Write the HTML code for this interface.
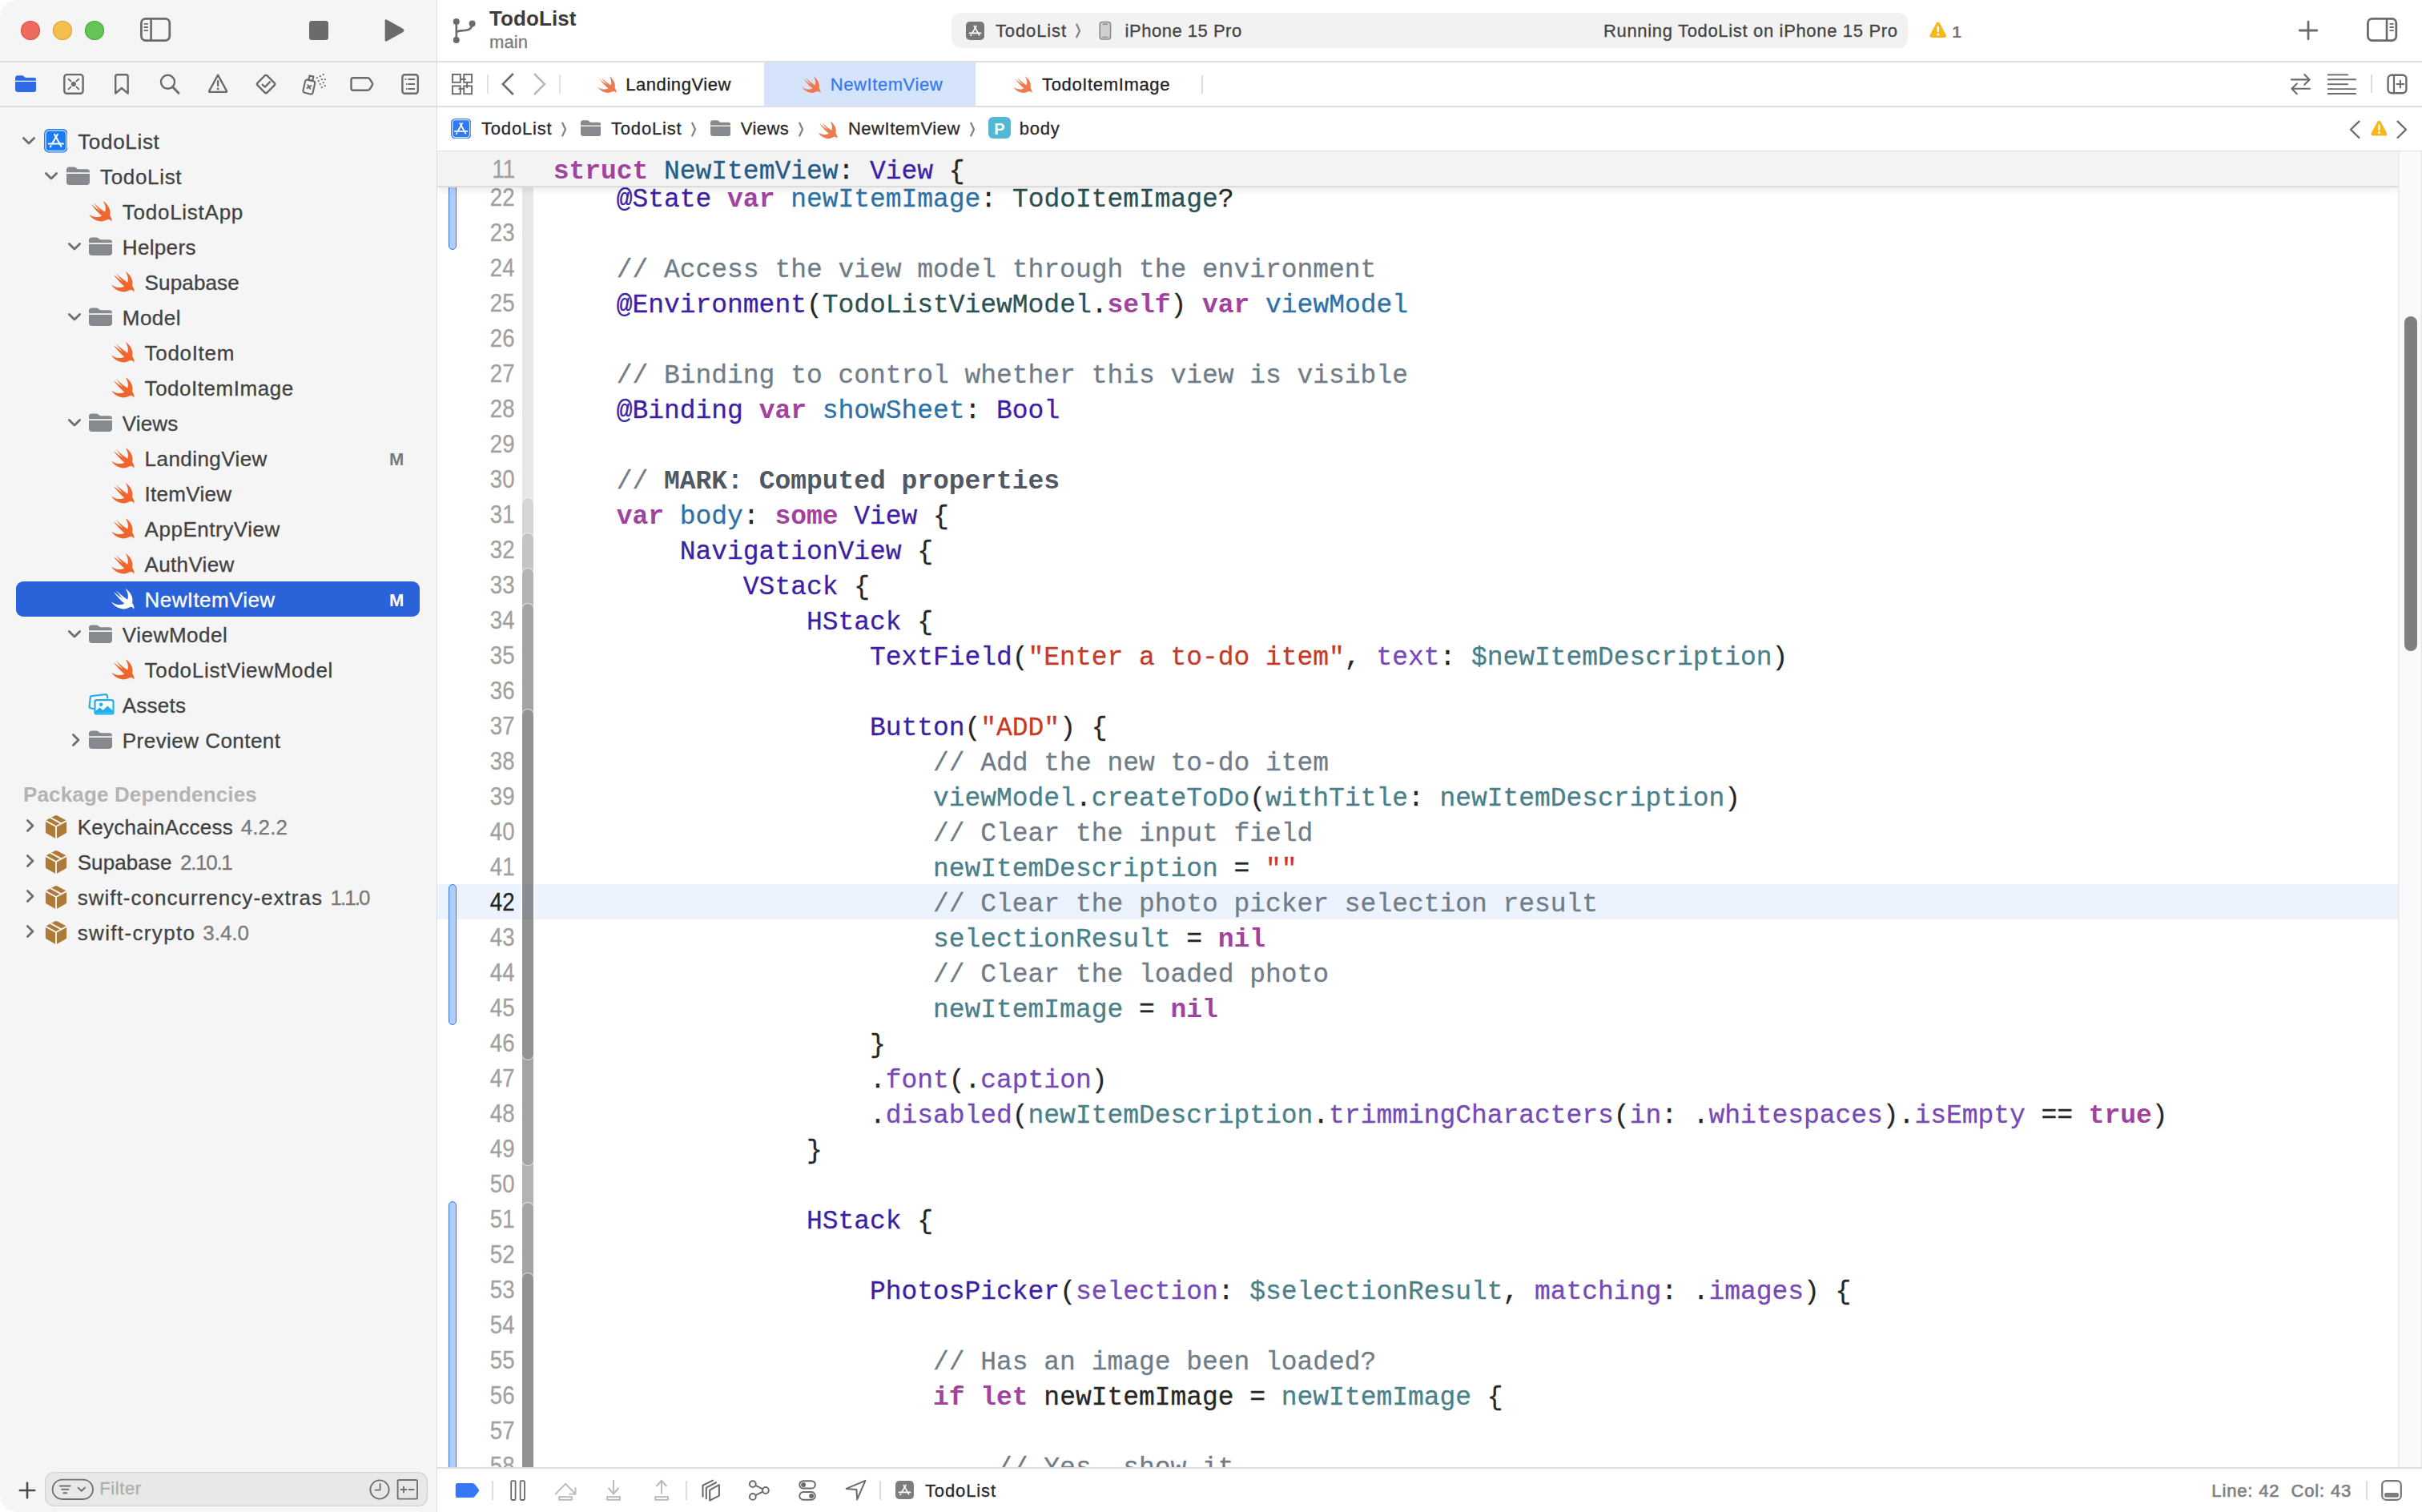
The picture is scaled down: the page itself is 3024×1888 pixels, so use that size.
<!DOCTYPE html>
<html lang="en"><head><meta charset="utf-8"><title>TodoList — NewItemView.swift</title>
<style>
html,body{margin:0;padding:0;background:#fff;}
body{width:3024px;height:1888px;overflow:hidden;position:relative;font-family:'Liberation Sans',sans-serif;}
#win{position:absolute;left:0;top:0;width:3024px;height:1888px;overflow:hidden;border-radius:22px 0 0 22px;background:#fff;}
#win div,#win span,#win svg{position:absolute;}
#win span{white-space:pre;-webkit-text-stroke:0.3px;}
.code{font-family:'Liberation Mono',monospace;font-size:33px;line-height:44px;letter-spacing:-0.04px;height:44px;left:692px;color:#262626;-webkit-text-stroke:0.35px;}
.code b{font-weight:700;}
.code i{font-style:normal;}
.k{color:#a1429f;font-weight:700;-webkit-text-stroke:0;}
.td{color:#245b88;}
.od{color:#2c72a8;}
.ot{color:#3d1fa5;}
.of{color:#7649b8;}
.pt{color:#2b5155;}
.pf{color:#4a8089;}
.s{color:#c63a28;}
.c{color:#707d89;}
.mk{color:#4f5964;font-weight:700;-webkit-text-stroke:0;}
.ln{font-size:31px;line-height:44px;height:44px;color:#a0a0a0;right:2351.2px;transform:scaleX(0.89);transform-origin:100% 50%;}

</style></head>
<body>
<div id="win">
<div style="left:0px;top:0px;width:545px;height:1888px;background:#f5f5f5;"></div>
<div style="left:544.5px;top:0px;width:1.5px;height:1888px;background:#dcdcdc;"></div>
<div style="left:0px;top:76px;width:545px;height:2px;background:#dcdcdc;"></div>
<div style="left:0px;top:132px;width:545px;height:2px;background:#dcdcdc;"></div>
<div style="left:546px;top:76px;width:2478px;height:2px;background:#e0e0e0;"></div>
<div style="left:546px;top:132px;width:2478px;height:2px;background:#e0e0e0;"></div>
<div style="left:546px;top:188px;width:2478px;height:2px;background:#e0e0e0;"></div>
<header id="toolbar">
<div style="left:26px;top:26px;width:24px;height:24px;border-radius:50%;background:#ed6a5e;box-shadow:inset 0 0 0 1px #d8574a;"></div>
<div style="left:66px;top:26px;width:24px;height:24px;border-radius:50%;background:#f5bf4f;box-shadow:inset 0 0 0 1px #d9a33c;"></div>
<div style="left:106px;top:26px;width:24px;height:24px;border-radius:50%;background:#62c554;box-shadow:inset 0 0 0 1px #4ea83c;"></div>
<svg style="left:172px;top:19px;" width="44" height="36" viewBox="0 0 44 36"><rect x="4.4" y="4.4" width="35.4" height="27.2" rx="5.5" fill="none" stroke="#6b6b6b" stroke-width="2.8"/><line x1="16.6" y1="4.4" x2="16.6" y2="31.6" stroke="#6b6b6b" stroke-width="2.6"/><g stroke="#6b6b6b" stroke-width="1.8" stroke-linecap="round"><line x1="8.4" y1="10.8" x2="12.2" y2="10.8"/><line x1="8.4" y1="15" x2="12.2" y2="15"/><line x1="8.4" y1="19.2" x2="12.2" y2="19.2"/></g></svg>
<div style="left:386px;top:26px;width:24px;height:24px;border-radius:3.5px;background:#6b6b6b;"></div>
<svg style="left:476px;top:20px;" width="34" height="36" viewBox="0 0 34 36"><path d="M4.6 6.2 L4.6 29.8 Q4.6 32.6 7.2 31.2 L27.4 19.9 Q29.6 18 27.4 16.1 L7.2 4.8 Q4.6 3.4 4.6 6.2 Z" fill="#6b6b6b"/></svg>
<svg style="left:560px;top:18px;" width="40" height="42" viewBox="0 0 40 42"><g fill="#6b6b6b"><circle cx="9.8" cy="9" r="4"/><circle cx="9.8" cy="32" r="4"/><circle cx="29.6" cy="11.6" r="4"/></g><path d="M9.8 9 V32 M9.8 23.5 Q9.8 21 14 20.6 L22 19.8 Q29.6 19 29.6 11.6" fill="none" stroke="#6b6b6b" stroke-width="2.6"/></svg>
<span style="top:10.19px;font-size:26px;line-height:26px;color:#3c3c3c;font-weight:700;-webkit-text-stroke:0;letter-spacing:0.096px;left:611px;">TodoList</span>
<span style="top:41.98px;font-size:22px;line-height:22px;color:#7a7a7a;letter-spacing:0.104px;left:611px;">main</span>
<div style="left:1188px;top:16px;width:1194px;height:44px;border-radius:11px;background:#f2f2f2;"></div>
<svg style="left:1206px;top:26.5px;" width="23" height="23" viewBox="0 0 24 24"><rect x="0" y="0" width="24" height="24" rx="5" fill="#777777"/><g stroke="#fff" stroke-width="1.7" stroke-linecap="round" fill="none"><path d="M13.6 5.6 L8.2 15"/><path d="M10.6 5.6 L17.4 17.6"/><path d="M4.6 15 H19.4"/><path d="M6.9 17.2 L6.4 18.1"/></g></svg>
<span style="top:27.78px;font-size:22px;line-height:22px;color:#444;letter-spacing:0.864px;left:1243px;">TodoList</span>
<svg style="left:1342px;top:28.5px;" width="8" height="19" viewBox="0 0 8 19"><path d="M1.9 0.8 L6 9.5 L1.9 18.2" fill="none" stroke="#858585" stroke-width="2.3" stroke-linejoin="miter"/></svg>
<svg style="left:1370px;top:25px;" width="20" height="27" viewBox="0 0 20 27"><rect x="3.2" y="2.4" width="13.4" height="21.6" rx="3" fill="#cfcfcf" stroke="#8a8a8a" stroke-width="1.5"/><line x1="7.4" y1="5.2" x2="12.4" y2="5.2" stroke="#8a8a8a" stroke-width="1.4" stroke-linecap="round"/><line x1="7" y1="21.4" x2="12.8" y2="21.4" stroke="#8a8a8a" stroke-width="1.2" stroke-linecap="round"/></svg>
<span style="top:27.78px;font-size:22px;line-height:22px;color:#444;letter-spacing:0.514px;left:1404.6px;">iPhone 15 Pro</span>
<span style="top:27.68px;font-size:22px;line-height:22px;color:#444;letter-spacing:0.664px;left:2002px;">Running TodoList on iPhone 15 Pro</span>
<svg style="left:2409.2px;top:27.4px;" width="21.4" height="20.4" viewBox="0 0 21.4 20.4"><path d="M10.7 0.6 Q12.1 0.6 12.9 2 L20.7 16.4 Q22 19.8 18.6 19.9 L2.8 19.9 Q-0.6 19.8 0.7 16.4 L8.5 2 Q9.3 0.6 10.7 0.6 Z" fill="#f5b91e"/><rect x="9.5" y="5.6" width="2.4" height="7.6" rx="1.2" fill="#fff"/><circle cx="10.7" cy="16" r="1.45" fill="#fff"/></svg>
<span style="top:28.72px;font-size:21px;line-height:21px;color:#777;font-weight:700;-webkit-text-stroke:0;left:2437.2px;">1</span>
<svg style="left:2868px;top:24px;" width="28" height="28" viewBox="0 0 28 28"><path d="M14 3.2 V24.8 M3.2 14 H24.8" stroke="#6b6b6b" stroke-width="2.8" stroke-linecap="round"/></svg>
<svg style="left:2952px;top:19px;" width="44" height="36" viewBox="0 0 44 36"><rect x="4.4" y="4.4" width="35.4" height="27.2" rx="5.5" fill="none" stroke="#6b6b6b" stroke-width="2.8"/><line x1="28" y1="4.4" x2="28" y2="31.6" stroke="#6b6b6b" stroke-width="2.6"/><g stroke="#6b6b6b" stroke-width="1.8" stroke-linecap="round"><line x1="32.2" y1="10.8" x2="36" y2="10.8"/><line x1="32.2" y1="15" x2="36" y2="15"/><line x1="32.2" y1="19.2" x2="36" y2="19.2"/></g></svg>
</header>
<nav id="tab-bar">
<svg style="left:562px;top:90px;" width="30" height="30" viewBox="0 0 30 30"><g fill="none" stroke="#6b6b6b" stroke-width="1.9"><rect x="2.95" y="2.95" width="9.85" height="9.85"/><rect x="17.2" y="2.95" width="9.85" height="9.85"/><rect x="2.95" y="17.4" width="9.85" height="9.85"/><rect x="17.2" y="17.4" width="9.85" height="9.85"/><path d="M12.8 9.05 H19.8 M21.1 12.8 V19.9 M10.3 20.9 H17.2"/></g></svg>
<div style="left:608.2px;top:93px;width:1.7px;height:23.6px;background:#e2e2e2;"></div>
<svg style="left:622px;top:88px;" width="24" height="34" viewBox="0 0 24 34"><path d="M18.8 4 L5.8 17 L18.8 30" fill="none" stroke="#6b6b6b" stroke-width="2.5" stroke-linejoin="miter"/></svg>
<svg style="left:662px;top:88px;" width="24" height="34" viewBox="0 0 24 34"><path d="M5 4 L18 17 L5 30" fill="none" stroke="#b8b8b8" stroke-width="2.5" stroke-linejoin="miter"/></svg>
<div style="left:698.2px;top:93px;width:1.7px;height:23.6px;background:#e2e2e2;"></div>
<div style="left:954px;top:78px;width:264px;height:54px;background:#d6e4fb;"></div>
<svg style="left:745.7px;top:95px;" width="24.6" height="22.712000000000003" viewBox="2.4 3.35 18.971 17.521"><path d="M13.543 3.41c4.114 2.47 6.545 7.162 5.549 11.131-.024.093-.05.181-.076.272l.002.001c2.062 2.538 1.5 5.258 1.236 4.745-1.072-2.086-3.066-1.568-4.088-1.043a6.803 6.803 0 0 1-.281.158l-.02.012-.002.002c-2.115 1.123-4.957 1.205-7.812-.022a12.568 12.568 0 0 1-5.64-4.838c.649.48 1.35.902 2.097 1.252 3.019 1.414 6.051 1.311 8.197-.002C9.651 12.73 7.101 9.67 5.146 7.191a10.628 10.628 0 0 1-1.005-1.384c2.34 2.142 6.038 4.83 7.365 5.576C8.69 8.408 6.208 4.743 6.324 4.86c4.436 4.47 8.528 6.996 8.528 6.996.154.085.27.154.36.213.085-.215.16-.437.224-.668.708-2.588-.09-5.548-1.893-7.992z" fill="#ee7b4f"/></svg>
<span style="top:95.28px;font-size:22px;line-height:22px;color:#222;letter-spacing:0.571px;left:781.2px;">LandingView</span>
<svg style="left:1001.4px;top:95px;" width="24.6" height="22.712000000000003" viewBox="2.4 3.35 18.971 17.521"><path d="M13.543 3.41c4.114 2.47 6.545 7.162 5.549 11.131-.024.093-.05.181-.076.272l.002.001c2.062 2.538 1.5 5.258 1.236 4.745-1.072-2.086-3.066-1.568-4.088-1.043a6.803 6.803 0 0 1-.281.158l-.02.012-.002.002c-2.115 1.123-4.957 1.205-7.812-.022a12.568 12.568 0 0 1-5.64-4.838c.649.48 1.35.902 2.097 1.252 3.019 1.414 6.051 1.311 8.197-.002C9.651 12.73 7.101 9.67 5.146 7.191a10.628 10.628 0 0 1-1.005-1.384c2.34 2.142 6.038 4.83 7.365 5.576C8.69 8.408 6.208 4.743 6.324 4.86c4.436 4.47 8.528 6.996 8.528 6.996.154.085.27.154.36.213.085-.215.16-.437.224-.668.708-2.588-.09-5.548-1.893-7.992z" fill="#ee7b4f"/></svg>
<span style="top:95.28px;font-size:22px;line-height:22px;color:#3478f6;letter-spacing:0.571px;left:1036.8px;">NewItemView</span>
<svg style="left:1265px;top:95px;" width="24.6" height="22.712000000000003" viewBox="2.4 3.35 18.971 17.521"><path d="M13.543 3.41c4.114 2.47 6.545 7.162 5.549 11.131-.024.093-.05.181-.076.272l.002.001c2.062 2.538 1.5 5.258 1.236 4.745-1.072-2.086-3.066-1.568-4.088-1.043a6.803 6.803 0 0 1-.281.158l-.02.012-.002.002c-2.115 1.123-4.957 1.205-7.812-.022a12.568 12.568 0 0 1-5.64-4.838c.649.48 1.35.902 2.097 1.252 3.019 1.414 6.051 1.311 8.197-.002C9.651 12.73 7.101 9.67 5.146 7.191a10.628 10.628 0 0 1-1.005-1.384c2.34 2.142 6.038 4.83 7.365 5.576C8.69 8.408 6.208 4.743 6.324 4.86c4.436 4.47 8.528 6.996 8.528 6.996.154.085.27.154.36.213.085-.215.16-.437.224-.668.708-2.588-.09-5.548-1.893-7.992z" fill="#ee7b4f"/></svg>
<span style="top:95.28px;font-size:22px;line-height:22px;color:#222;letter-spacing:0.655px;left:1301px;">TodoItemImage</span>
<div style="left:1500px;top:94px;width:1.6px;height:22.5px;background:#dcdcdc;"></div>
<svg style="left:2858px;top:90px;" width="29" height="30" viewBox="0 0 29 30"><g fill="none" stroke="#6b6b6b" stroke-width="2.1" stroke-linecap="round" stroke-linejoin="round"><path d="M3 9.4 H25.6 M19.2 3 L25.6 9.4 L19.2 15.8"/><path d="M26 20.8 H3.4 M9.8 14.4 L3.4 20.8 L9.8 27.2"/></g></svg>
<svg style="left:2904px;top:90px;" width="40" height="30" viewBox="0 0 40 30"><g stroke="#6b6b6b" stroke-width="1.9"><line x1="2" y1="3.4" x2="27.8" y2="3.4"/><line x1="2" y1="9.3" x2="37.8" y2="9.3"/><line x1="2" y1="15.2" x2="27.8" y2="15.2"/><line x1="2" y1="21.1" x2="37.8" y2="21.1"/><line x1="2" y1="27" x2="37.8" y2="27"/></g></svg>
<div style="left:2960.2px;top:93px;width:1.6px;height:23px;background:#dcdcdc;"></div>
<svg style="left:2978px;top:90px;" width="30" height="30" viewBox="0 0 30 30"><rect x="3.6" y="3.7" width="22.8" height="22.6" rx="4.5" fill="none" stroke="#6b6b6b" stroke-width="2.4"/><line x1="11" y1="3.7" x2="11" y2="26.3" stroke="#6b6b6b" stroke-width="2.2"/><path d="M18.9 10.6 V19.4 M14.5 15 H23.3" stroke="#6b6b6b" stroke-width="2" stroke-linecap="round"/></svg>
</nav>
<nav id="jump-bar">
<svg style="left:563px;top:147.5px;" width="25.3" height="25.3" viewBox="0 0 24 24"><rect x="0" y="0" width="24" height="24" rx="5" fill="#2f7af5"/><rect x="1.6" y="1.6" width="20.8" height="20.8" rx="3.8" fill="none" stroke="#d4e3fd" stroke-width="1.25"/><g stroke="#fff" stroke-width="1.7" stroke-linecap="round" fill="none"><path d="M13.6 5.6 L8.2 15"/><path d="M10.6 5.6 L17.4 17.6"/><path d="M4.6 15 H19.4"/><path d="M6.9 17.2 L6.4 18.1"/></g></svg>
<span style="top:150.48px;font-size:22px;line-height:22px;color:#2a2a2a;letter-spacing:0.807px;left:601px;">TodoList</span>
<svg style="left:700px;top:152px;" width="8" height="19" viewBox="0 0 8 19"><path d="M1.9 0.8 L6 9.5 L1.9 18.2" fill="none" stroke="#858585" stroke-width="2.3" stroke-linejoin="miter"/></svg>
<svg style="left:725px;top:150px;" width="25.3" height="20.240000000000002" viewBox="0 0 30 24"><path d="M0 4.2 Q0 0.4 3.6 0.4 H9.4 Q11.2 0.4 12.4 1.6 L13.4 2.6 Q14.2 3.4 15.6 3.4 H26.4 Q30 3.4 30 7 V7.6 H0 Z" fill="#868a8f"/><path d="M0 9.2 H30 V20 Q30 23.8 26.2 23.8 H3.8 Q0 23.8 0 20 Z" fill="#868a8f"/></svg>
<span style="top:150.48px;font-size:22px;line-height:22px;color:#2a2a2a;letter-spacing:0.807px;left:763px;">TodoList</span>
<svg style="left:862px;top:152px;" width="8" height="19" viewBox="0 0 8 19"><path d="M1.9 0.8 L6 9.5 L1.9 18.2" fill="none" stroke="#858585" stroke-width="2.3" stroke-linejoin="miter"/></svg>
<svg style="left:886.9px;top:150px;" width="25.3" height="20.240000000000002" viewBox="0 0 30 24"><path d="M0 4.2 Q0 0.4 3.6 0.4 H9.4 Q11.2 0.4 12.4 1.6 L13.4 2.6 Q14.2 3.4 15.6 3.4 H26.4 Q30 3.4 30 7 V7.6 H0 Z" fill="#868a8f"/><path d="M0 9.2 H30 V20 Q30 23.8 26.2 23.8 H3.8 Q0 23.8 0 20 Z" fill="#868a8f"/></svg>
<span style="top:150.48px;font-size:22px;line-height:22px;color:#2a2a2a;letter-spacing:0.426px;left:924.8px;">Views</span>
<svg style="left:996px;top:152px;" width="8" height="19" viewBox="0 0 8 19"><path d="M1.9 0.8 L6 9.5 L1.9 18.2" fill="none" stroke="#858585" stroke-width="2.3" stroke-linejoin="miter"/></svg>
<svg style="left:1021px;top:151px;" width="25.6" height="23.632" viewBox="2.4 3.35 18.940 17.490"><path d="M13.543 3.41c4.114 2.47 6.545 7.162 5.549 11.131-.024.093-.05.181-.076.272l.002.001c2.062 2.538 1.5 5.258 1.236 4.745-1.072-2.086-3.066-1.568-4.088-1.043a6.803 6.803 0 0 1-.281.158l-.02.012-.002.002c-2.115 1.123-4.957 1.205-7.812-.022a12.568 12.568 0 0 1-5.64-4.838c.649.48 1.35.902 2.097 1.252 3.019 1.414 6.051 1.311 8.197-.002C9.651 12.73 7.101 9.67 5.146 7.191a10.628 10.628 0 0 1-1.005-1.384c2.34 2.142 6.038 4.83 7.365 5.576C8.69 8.408 6.208 4.743 6.324 4.86c4.436 4.47 8.528 6.996 8.528 6.996.154.085.27.154.36.213.085-.215.16-.437.224-.668.708-2.588-.09-5.548-1.893-7.992z" fill="#ee7b4f"/></svg>
<span style="top:150.48px;font-size:22px;line-height:22px;color:#2a2a2a;letter-spacing:0.541px;left:1058.9px;">NewItemView</span>
<svg style="left:1210px;top:152px;" width="8" height="19" viewBox="0 0 8 19"><path d="M1.9 0.8 L6 9.5 L1.9 18.2" fill="none" stroke="#858585" stroke-width="2.3" stroke-linejoin="miter"/></svg>
<div style="left:1234px;top:146.3px;width:28px;height:27.2px;border-radius:6px;background:#52b8d3;"></div>
<span style="top:151.07px;font-size:20px;line-height:20px;color:#fff;font-weight:700;-webkit-text-stroke:0;left:1241.2px;">P</span>
<span style="top:150.48px;font-size:22px;line-height:22px;color:#2a2a2a;letter-spacing:0.760px;left:1272.8px;">body</span>
<svg style="left:2930px;top:148px;" width="20" height="28" viewBox="0 0 20 28"><path d="M15.4 3.6 L5 13.8 L15.4 24" fill="none" stroke="#6b6b6b" stroke-width="2.3" stroke-linecap="round" stroke-linejoin="round"/></svg>
<svg style="left:2959.6px;top:150px;" width="20.8" height="20" viewBox="0 0 21.4 20.4"><path d="M10.7 0.6 Q12.1 0.6 12.9 2 L20.7 16.4 Q22 19.8 18.6 19.9 L2.8 19.9 Q-0.6 19.8 0.7 16.4 L8.5 2 Q9.3 0.6 10.7 0.6 Z" fill="#f5b91e"/><rect x="9.5" y="5.6" width="2.4" height="7.6" rx="1.2" fill="#fff"/><circle cx="10.7" cy="16" r="1.45" fill="#fff"/></svg>
<svg style="left:2989px;top:148px;" width="20" height="28" viewBox="0 0 20 28"><path d="M4.6 3.6 L15 13.8 L4.6 24" fill="none" stroke="#6b6b6b" stroke-width="2.3" stroke-linecap="round" stroke-linejoin="round"/></svg>
</nav>
<aside id="navigator">
<nav id="navigator-tabs">
<svg style="left:18.8px;top:93.9px;" width="26.4" height="21.12" viewBox="0 0 30 24"><path d="M0 4.2 Q0 0.4 3.6 0.4 H9.4 Q11.2 0.4 12.4 1.6 L13.4 2.6 Q14.2 3.4 15.6 3.4 H26.4 Q30 3.4 30 7 V7.6 H0 Z" fill="#2f6ae9"/><path d="M0 9.2 H30 V20 Q30 23.8 26.2 23.8 H3.8 Q0 23.8 0 20 Z" fill="#2f6ae9"/></svg>
<svg style="left:76px;top:89px;" width="32" height="32" viewBox="0 0 32 32"><rect x="4.3" y="4.1" width="23.3" height="23.7" rx="3.4" fill="none" stroke="#6b6b6b" stroke-width="2.4"/><circle cx="15.9" cy="16" r="3" fill="#6b6b6b"/><g stroke="#6b6b6b" stroke-width="1.9" stroke-linecap="round"><path d="M9.6 9.8 L12.4 12.4 M22.2 9.8 L19.4 12.4 M9.6 22.2 L12.4 19.6 M22.2 22.2 L19.4 19.6"/></g></svg>
<svg style="left:140px;top:89px;" width="24" height="32" viewBox="0 0 24 32"><path d="M4.2 27.6 V6.6 Q4.2 4.2 6.6 4.2 H17.3 Q19.7 4.2 19.7 6.6 V27.6 L11.95 21 Z" fill="none" stroke="#6b6b6b" stroke-width="2.4" stroke-linejoin="round"/></svg>
<svg style="left:196px;top:89px;" width="32" height="32" viewBox="0 0 32 32"><circle cx="13.5" cy="13.3" r="8.5" fill="none" stroke="#6b6b6b" stroke-width="2.4"/><path d="M19.8 19.8 L27 27.2" stroke="#6b6b6b" stroke-width="3" stroke-linecap="round"/></svg>
<svg style="left:257px;top:89px;" width="31" height="30" viewBox="0 0 31 30"><path d="M15.1 4.6 L26 24.6 Q26.6 25.8 25.2 25.8 H5 Q3.6 25.8 4.2 24.6 Z" fill="none" stroke="#6b6b6b" stroke-width="2.3" stroke-linejoin="round"/><rect x="14" y="11" width="2.3" height="8" rx="1.1" fill="#6b6b6b"/><circle cx="15.15" cy="22" r="1.4" fill="#6b6b6b"/></svg>
<svg style="left:316px;top:89px;" width="32" height="32" viewBox="0 0 32 32"><rect x="7.6" y="7.5" width="17" height="17" rx="2.4" transform="rotate(45 16.1 16)" fill="none" stroke="#6b6b6b" stroke-width="2.4"/><path d="M11.6 16.6 L14.8 19.6 L21 13.4" fill="none" stroke="#6b6b6b" stroke-width="2.2" stroke-linecap="round" stroke-linejoin="round"/></svg>
<svg style="left:375px;top:89px;" width="36" height="32" viewBox="0 0 36 32"><g transform="rotate(13 11 18)" fill="none" stroke="#6b6b6b" stroke-width="2.1" stroke-linejoin="round"><rect x="5" y="11.2" width="12.4" height="16.6" rx="2.6"/><rect x="8.7" y="5.6" width="5" height="5.6"/><path d="M8.6 17 L13.8 22 M13.8 17 L8.6 22" stroke-width="1.9"/></g><g fill="#6b6b6b"><rect x="19.8" y="7.2" width="1.9" height="1.9"/><rect x="23.8" y="5.2" width="1.9" height="1.9"/><rect x="27.8" y="3.2" width="1.9" height="1.9"/><rect x="21.8" y="11.2" width="1.9" height="1.9"/><rect x="25.8" y="9.2" width="1.9" height="1.9"/><rect x="29.8" y="9.2" width="1.9" height="1.9"/><rect x="23.8" y="15.2" width="1.9" height="1.9"/><rect x="27.8" y="13.2" width="1.9" height="1.9"/><rect x="29.8" y="17.2" width="1.9" height="1.9"/><rect x="25.8" y="19.2" width="1.9" height="1.9"/></g></svg>
<svg style="left:434px;top:92px;" width="36" height="26" viewBox="0 0 36 26"><path d="M7 5.2 H24.8 Q26.8 5.2 27.8 6.8 L30.8 11.6 Q31.6 13 30.8 14.4 L27.8 19.2 Q26.8 20.8 24.8 20.8 H7 Q4.5 20.8 4.5 18.3 V7.7 Q4.5 5.2 7 5.2 Z" fill="none" stroke="#6b6b6b" stroke-width="2.4" stroke-linejoin="round"/></svg>
<svg style="left:498px;top:89px;" width="28" height="32" viewBox="0 0 28 32"><rect x="4.4" y="4.2" width="19.4" height="23.6" rx="3" fill="none" stroke="#6b6b6b" stroke-width="2.4"/><g stroke="#6b6b6b" stroke-width="2"><path d="M11.4 10 H20 M11.4 16 H20 M11.4 22 H20"/><path d="M7.6 10 H9.4 M9 16 H10.4 M9 22 H10.4"/></g></svg>
</nav>
<section id="project-tree">
<div style="left:20px;top:726px;width:504px;height:44px;border-radius:9px;background:#2a62d9;"></div>
<svg style="left:25.2px;top:168.4px;" width="22" height="16" viewBox="0 0 22 16"><path d="M4.4 4.4 L11 11 L17.6 4.4" fill="none" stroke="#6e6e6e" stroke-width="2.8" stroke-linecap="round" stroke-linejoin="round"/></svg>
<svg style="left:54.5px;top:161px;" width="29.6" height="29.6" viewBox="0 0 24 24"><rect x="0" y="0" width="24" height="24" rx="5" fill="#1b7bf5"/><rect x="1.6" y="1.6" width="20.8" height="20.8" rx="3.8" fill="none" stroke="#b9d6fc" stroke-width="1.25"/><g stroke="#fff" stroke-width="1.7" stroke-linecap="round" fill="none"><path d="M13.6 5.6 L8.2 15"/><path d="M10.6 5.6 L17.4 17.6"/><path d="M4.6 15 H19.4"/><path d="M6.9 17.2 L6.4 18.1"/></g></svg>
<span style="top:163.69px;font-size:26px;line-height:26px;color:#424242;letter-spacing:0.679px;left:97.2px;">TodoList</span>
<svg style="left:53.400000000000006px;top:212.4px;" width="22" height="16" viewBox="0 0 22 16"><path d="M4.4 4.4 L11 11 L17.6 4.4" fill="none" stroke="#6e6e6e" stroke-width="2.8" stroke-linecap="round" stroke-linejoin="round"/></svg>
<svg style="left:82.7px;top:208px;" width="29" height="23.200000000000003" viewBox="0 0 30 24"><path d="M0 4.2 Q0 0.4 3.6 0.4 H9.4 Q11.2 0.4 12.4 1.6 L13.4 2.6 Q14.2 3.4 15.6 3.4 H26.4 Q30 3.4 30 7 V7.6 H0 Z" fill="#868a8f"/><path d="M0 9.2 H30 V20 Q30 23.8 26.2 23.8 H3.8 Q0 23.8 0 20 Z" fill="#868a8f"/></svg>
<span style="top:207.69px;font-size:26px;line-height:26px;color:#424242;letter-spacing:0.679px;left:125.0px;">TodoList</span>
<svg style="left:110.9px;top:250.8px;" width="29.6" height="27.312" viewBox="2.4 3.35 18.836 17.386"><path d="M13.543 3.41c4.114 2.47 6.545 7.162 5.549 11.131-.024.093-.05.181-.076.272l.002.001c2.062 2.538 1.5 5.258 1.236 4.745-1.072-2.086-3.066-1.568-4.088-1.043a6.803 6.803 0 0 1-.281.158l-.02.012-.002.002c-2.115 1.123-4.957 1.205-7.812-.022a12.568 12.568 0 0 1-5.64-4.838c.649.48 1.35.902 2.097 1.252 3.019 1.414 6.051 1.311 8.197-.002C9.651 12.73 7.101 9.67 5.146 7.191a10.628 10.628 0 0 1-1.005-1.384c2.34 2.142 6.038 4.83 7.365 5.576C8.69 8.408 6.208 4.743 6.324 4.86c4.436 4.47 8.528 6.996 8.528 6.996.154.085.27.154.36.213.085-.215.16-.437.224-.668.708-2.588-.09-5.548-1.893-7.992z" fill="#f0662f"/></svg>
<span style="top:251.69px;font-size:26px;line-height:26px;color:#424242;letter-spacing:0.739px;left:152.8px;">TodoListApp</span>
<svg style="left:81.60000000000001px;top:300.4px;" width="22" height="16" viewBox="0 0 22 16"><path d="M4.4 4.4 L11 11 L17.6 4.4" fill="none" stroke="#6e6e6e" stroke-width="2.8" stroke-linecap="round" stroke-linejoin="round"/></svg>
<svg style="left:110.9px;top:296px;" width="29" height="23.200000000000003" viewBox="0 0 30 24"><path d="M0 4.2 Q0 0.4 3.6 0.4 H9.4 Q11.2 0.4 12.4 1.6 L13.4 2.6 Q14.2 3.4 15.6 3.4 H26.4 Q30 3.4 30 7 V7.6 H0 Z" fill="#868a8f"/><path d="M0 9.2 H30 V20 Q30 23.8 26.2 23.8 H3.8 Q0 23.8 0 20 Z" fill="#868a8f"/></svg>
<span style="top:295.69px;font-size:26px;line-height:26px;color:#424242;letter-spacing:0.334px;left:152.8px;">Helpers</span>
<svg style="left:139.1px;top:338.8px;" width="29.6" height="27.312" viewBox="2.4 3.35 18.836 17.386"><path d="M13.543 3.41c4.114 2.47 6.545 7.162 5.549 11.131-.024.093-.05.181-.076.272l.002.001c2.062 2.538 1.5 5.258 1.236 4.745-1.072-2.086-3.066-1.568-4.088-1.043a6.803 6.803 0 0 1-.281.158l-.02.012-.002.002c-2.115 1.123-4.957 1.205-7.812-.022a12.568 12.568 0 0 1-5.64-4.838c.649.48 1.35.902 2.097 1.252 3.019 1.414 6.051 1.311 8.197-.002C9.651 12.73 7.101 9.67 5.146 7.191a10.628 10.628 0 0 1-1.005-1.384c2.34 2.142 6.038 4.83 7.365 5.576C8.69 8.408 6.208 4.743 6.324 4.86c4.436 4.47 8.528 6.996 8.528 6.996.154.085.27.154.36.213.085-.215.16-.437.224-.668.708-2.588-.09-5.548-1.893-7.992z" fill="#f0662f"/></svg>
<span style="top:339.69px;font-size:26px;line-height:26px;color:#424242;letter-spacing:0.142px;left:180.60000000000002px;">Supabase</span>
<svg style="left:81.60000000000001px;top:388.4px;" width="22" height="16" viewBox="0 0 22 16"><path d="M4.4 4.4 L11 11 L17.6 4.4" fill="none" stroke="#6e6e6e" stroke-width="2.8" stroke-linecap="round" stroke-linejoin="round"/></svg>
<svg style="left:110.9px;top:384px;" width="29" height="23.200000000000003" viewBox="0 0 30 24"><path d="M0 4.2 Q0 0.4 3.6 0.4 H9.4 Q11.2 0.4 12.4 1.6 L13.4 2.6 Q14.2 3.4 15.6 3.4 H26.4 Q30 3.4 30 7 V7.6 H0 Z" fill="#868a8f"/><path d="M0 9.2 H30 V20 Q30 23.8 26.2 23.8 H3.8 Q0 23.8 0 20 Z" fill="#868a8f"/></svg>
<span style="top:383.69px;font-size:26px;line-height:26px;color:#424242;letter-spacing:0.468px;left:152.8px;">Model</span>
<svg style="left:139.1px;top:426.8px;" width="29.6" height="27.312" viewBox="2.4 3.35 18.836 17.386"><path d="M13.543 3.41c4.114 2.47 6.545 7.162 5.549 11.131-.024.093-.05.181-.076.272l.002.001c2.062 2.538 1.5 5.258 1.236 4.745-1.072-2.086-3.066-1.568-4.088-1.043a6.803 6.803 0 0 1-.281.158l-.02.012-.002.002c-2.115 1.123-4.957 1.205-7.812-.022a12.568 12.568 0 0 1-5.64-4.838c.649.48 1.35.902 2.097 1.252 3.019 1.414 6.051 1.311 8.197-.002C9.651 12.73 7.101 9.67 5.146 7.191a10.628 10.628 0 0 1-1.005-1.384c2.34 2.142 6.038 4.83 7.365 5.576C8.69 8.408 6.208 4.743 6.324 4.86c4.436 4.47 8.528 6.996 8.528 6.996.154.085.27.154.36.213.085-.215.16-.437.224-.668.708-2.588-.09-5.548-1.893-7.992z" fill="#f0662f"/></svg>
<span style="top:427.69px;font-size:26px;line-height:26px;color:#424242;letter-spacing:0.678px;left:180.60000000000002px;">TodoItem</span>
<svg style="left:139.1px;top:470.8px;" width="29.6" height="27.312" viewBox="2.4 3.35 18.836 17.386"><path d="M13.543 3.41c4.114 2.47 6.545 7.162 5.549 11.131-.024.093-.05.181-.076.272l.002.001c2.062 2.538 1.5 5.258 1.236 4.745-1.072-2.086-3.066-1.568-4.088-1.043a6.803 6.803 0 0 1-.281.158l-.02.012-.002.002c-2.115 1.123-4.957 1.205-7.812-.022a12.568 12.568 0 0 1-5.64-4.838c.649.48 1.35.902 2.097 1.252 3.019 1.414 6.051 1.311 8.197-.002C9.651 12.73 7.101 9.67 5.146 7.191a10.628 10.628 0 0 1-1.005-1.384c2.34 2.142 6.038 4.83 7.365 5.576C8.69 8.408 6.208 4.743 6.324 4.86c4.436 4.47 8.528 6.996 8.528 6.996.154.085.27.154.36.213.085-.215.16-.437.224-.668.708-2.588-.09-5.548-1.893-7.992z" fill="#f0662f"/></svg>
<span style="top:471.69px;font-size:26px;line-height:26px;color:#424242;letter-spacing:0.532px;left:180.60000000000002px;">TodoItemImage</span>
<svg style="left:81.60000000000001px;top:520.4px;" width="22" height="16" viewBox="0 0 22 16"><path d="M4.4 4.4 L11 11 L17.6 4.4" fill="none" stroke="#6e6e6e" stroke-width="2.8" stroke-linecap="round" stroke-linejoin="round"/></svg>
<svg style="left:110.9px;top:516px;" width="29" height="23.200000000000003" viewBox="0 0 30 24"><path d="M0 4.2 Q0 0.4 3.6 0.4 H9.4 Q11.2 0.4 12.4 1.6 L13.4 2.6 Q14.2 3.4 15.6 3.4 H26.4 Q30 3.4 30 7 V7.6 H0 Z" fill="#868a8f"/><path d="M0 9.2 H30 V20 Q30 23.8 26.2 23.8 H3.8 Q0 23.8 0 20 Z" fill="#868a8f"/></svg>
<span style="top:515.69px;font-size:26px;line-height:26px;color:#424242;letter-spacing:0.127px;left:152.8px;">Views</span>
<svg style="left:139.1px;top:558.8px;" width="29.6" height="27.312" viewBox="2.4 3.35 18.836 17.386"><path d="M13.543 3.41c4.114 2.47 6.545 7.162 5.549 11.131-.024.093-.05.181-.076.272l.002.001c2.062 2.538 1.5 5.258 1.236 4.745-1.072-2.086-3.066-1.568-4.088-1.043a6.803 6.803 0 0 1-.281.158l-.02.012-.002.002c-2.115 1.123-4.957 1.205-7.812-.022a12.568 12.568 0 0 1-5.64-4.838c.649.48 1.35.902 2.097 1.252 3.019 1.414 6.051 1.311 8.197-.002C9.651 12.73 7.101 9.67 5.146 7.191a10.628 10.628 0 0 1-1.005-1.384c2.34 2.142 6.038 4.83 7.365 5.576C8.69 8.408 6.208 4.743 6.324 4.86c4.436 4.47 8.528 6.996 8.528 6.996.154.085.27.154.36.213.085-.215.16-.437.224-.668.708-2.588-.09-5.548-1.893-7.992z" fill="#f0662f"/></svg>
<span style="top:559.69px;font-size:26px;line-height:26px;color:#424242;letter-spacing:0.438px;left:180.60000000000002px;">LandingView</span>
<span style="top:562.88px;font-size:22px;line-height:22px;color:#7a7a7a;font-weight:700;-webkit-text-stroke:0;letter-spacing:-0.828px;left:486px;">M</span>
<svg style="left:139.1px;top:602.8px;" width="29.6" height="27.312" viewBox="2.4 3.35 18.836 17.386"><path d="M13.543 3.41c4.114 2.47 6.545 7.162 5.549 11.131-.024.093-.05.181-.076.272l.002.001c2.062 2.538 1.5 5.258 1.236 4.745-1.072-2.086-3.066-1.568-4.088-1.043a6.803 6.803 0 0 1-.281.158l-.02.012-.002.002c-2.115 1.123-4.957 1.205-7.812-.022a12.568 12.568 0 0 1-5.64-4.838c.649.48 1.35.902 2.097 1.252 3.019 1.414 6.051 1.311 8.197-.002C9.651 12.73 7.101 9.67 5.146 7.191a10.628 10.628 0 0 1-1.005-1.384c2.34 2.142 6.038 4.83 7.365 5.576C8.69 8.408 6.208 4.743 6.324 4.86c4.436 4.47 8.528 6.996 8.528 6.996.154.085.27.154.36.213.085-.215.16-.437.224-.668.708-2.588-.09-5.548-1.893-7.992z" fill="#f0662f"/></svg>
<span style="top:603.69px;font-size:26px;line-height:26px;color:#424242;letter-spacing:0.278px;left:180.60000000000002px;">ItemView</span>
<svg style="left:139.1px;top:646.8px;" width="29.6" height="27.312" viewBox="2.4 3.35 18.836 17.386"><path d="M13.543 3.41c4.114 2.47 6.545 7.162 5.549 11.131-.024.093-.05.181-.076.272l.002.001c2.062 2.538 1.5 5.258 1.236 4.745-1.072-2.086-3.066-1.568-4.088-1.043a6.803 6.803 0 0 1-.281.158l-.02.012-.002.002c-2.115 1.123-4.957 1.205-7.812-.022a12.568 12.568 0 0 1-5.64-4.838c.649.48 1.35.902 2.097 1.252 3.019 1.414 6.051 1.311 8.197-.002C9.651 12.73 7.101 9.67 5.146 7.191a10.628 10.628 0 0 1-1.005-1.384c2.34 2.142 6.038 4.83 7.365 5.576C8.69 8.408 6.208 4.743 6.324 4.86c4.436 4.47 8.528 6.996 8.528 6.996.154.085.27.154.36.213.085-.215.16-.437.224-.668.708-2.588-.09-5.548-1.893-7.992z" fill="#f0662f"/></svg>
<span style="top:647.69px;font-size:26px;line-height:26px;color:#424242;letter-spacing:0.532px;left:180.60000000000002px;">AppEntryView</span>
<svg style="left:139.1px;top:690.8px;" width="29.6" height="27.312" viewBox="2.4 3.35 18.836 17.386"><path d="M13.543 3.41c4.114 2.47 6.545 7.162 5.549 11.131-.024.093-.05.181-.076.272l.002.001c2.062 2.538 1.5 5.258 1.236 4.745-1.072-2.086-3.066-1.568-4.088-1.043a6.803 6.803 0 0 1-.281.158l-.02.012-.002.002c-2.115 1.123-4.957 1.205-7.812-.022a12.568 12.568 0 0 1-5.64-4.838c.649.48 1.35.902 2.097 1.252 3.019 1.414 6.051 1.311 8.197-.002C9.651 12.73 7.101 9.67 5.146 7.191a10.628 10.628 0 0 1-1.005-1.384c2.34 2.142 6.038 4.83 7.365 5.576C8.69 8.408 6.208 4.743 6.324 4.86c4.436 4.47 8.528 6.996 8.528 6.996.154.085.27.154.36.213.085-.215.16-.437.224-.668.708-2.588-.09-5.548-1.893-7.992z" fill="#f0662f"/></svg>
<span style="top:691.69px;font-size:26px;line-height:26px;color:#424242;letter-spacing:0.332px;left:180.60000000000002px;">AuthView</span>
<svg style="left:139.1px;top:734.8px;" width="29.6" height="27.312" viewBox="2.4 3.35 18.836 17.386"><path d="M13.543 3.41c4.114 2.47 6.545 7.162 5.549 11.131-.024.093-.05.181-.076.272l.002.001c2.062 2.538 1.5 5.258 1.236 4.745-1.072-2.086-3.066-1.568-4.088-1.043a6.803 6.803 0 0 1-.281.158l-.02.012-.002.002c-2.115 1.123-4.957 1.205-7.812-.022a12.568 12.568 0 0 1-5.64-4.838c.649.48 1.35.902 2.097 1.252 3.019 1.414 6.051 1.311 8.197-.002C9.651 12.73 7.101 9.67 5.146 7.191a10.628 10.628 0 0 1-1.005-1.384c2.34 2.142 6.038 4.83 7.365 5.576C8.69 8.408 6.208 4.743 6.324 4.86c4.436 4.47 8.528 6.996 8.528 6.996.154.085.27.154.36.213.085-.215.16-.437.224-.668.708-2.588-.09-5.548-1.893-7.992z" fill="#fff"/></svg>
<span style="top:735.69px;font-size:26px;line-height:26px;color:#fff;letter-spacing:0.403px;left:180.60000000000002px;">NewItemView</span>
<span style="top:738.88px;font-size:22px;line-height:22px;color:#fff;font-weight:700;-webkit-text-stroke:0;letter-spacing:-0.828px;left:486px;">M</span>
<svg style="left:81.60000000000001px;top:784.4px;" width="22" height="16" viewBox="0 0 22 16"><path d="M4.4 4.4 L11 11 L17.6 4.4" fill="none" stroke="#6e6e6e" stroke-width="2.8" stroke-linecap="round" stroke-linejoin="round"/></svg>
<svg style="left:110.9px;top:780px;" width="29" height="23.200000000000003" viewBox="0 0 30 24"><path d="M0 4.2 Q0 0.4 3.6 0.4 H9.4 Q11.2 0.4 12.4 1.6 L13.4 2.6 Q14.2 3.4 15.6 3.4 H26.4 Q30 3.4 30 7 V7.6 H0 Z" fill="#868a8f"/><path d="M0 9.2 H30 V20 Q30 23.8 26.2 23.8 H3.8 Q0 23.8 0 20 Z" fill="#868a8f"/></svg>
<span style="top:779.69px;font-size:26px;line-height:26px;color:#424242;letter-spacing:0.550px;left:152.8px;">ViewModel</span>
<svg style="left:139.1px;top:822.8px;" width="29.6" height="27.312" viewBox="2.4 3.35 18.836 17.386"><path d="M13.543 3.41c4.114 2.47 6.545 7.162 5.549 11.131-.024.093-.05.181-.076.272l.002.001c2.062 2.538 1.5 5.258 1.236 4.745-1.072-2.086-3.066-1.568-4.088-1.043a6.803 6.803 0 0 1-.281.158l-.02.012-.002.002c-2.115 1.123-4.957 1.205-7.812-.022a12.568 12.568 0 0 1-5.64-4.838c.649.48 1.35.902 2.097 1.252 3.019 1.414 6.051 1.311 8.197-.002C9.651 12.73 7.101 9.67 5.146 7.191a10.628 10.628 0 0 1-1.005-1.384c2.34 2.142 6.038 4.83 7.365 5.576C8.69 8.408 6.208 4.743 6.324 4.86c4.436 4.47 8.528 6.996 8.528 6.996.154.085.27.154.36.213.085-.215.16-.437.224-.668.708-2.588-.09-5.548-1.893-7.992z" fill="#f0662f"/></svg>
<span style="top:823.69px;font-size:26px;line-height:26px;color:#424242;letter-spacing:0.703px;left:180.60000000000002px;">TodoListViewModel</span>
<svg style="left:108.9px;top:865px;" width="36" height="30" viewBox="0 0 36 30"><g fill="none" stroke="#22aef0" stroke-width="2.2" stroke-linejoin="round"><path d="M8.6 20.2 L4.2 19.2 Q2.4 18.8 2.6 17 L3.8 5.6 Q4 3.8 5.8 4 L22.6 2.2 Q24.4 2 24.8 3.8 L25.4 7.4"/></g><rect x="8.4" y="8" width="25.2" height="19.6" rx="3.4" fill="#22aef0"/><rect x="10.6" y="10.2" width="20.8" height="15.2" rx="1.6" fill="#fff"/><circle cx="17.2" cy="14.8" r="2.3" fill="#22aef0"/><path d="M10.6 25.4 V22.6 L15.4 18.4 L19.6 21.8 L25.2 16.4 L31.4 22 V25.4 Z" fill="#22aef0"/></svg>
<span style="top:867.69px;font-size:26px;line-height:26px;color:#424242;letter-spacing:0.234px;left:152.8px;">Assets</span>
<svg style="left:86.5px;top:912.8px;" width="16" height="22" viewBox="0 0 16 22"><path d="M4.4 4.4 L11 11 L4.4 17.6" fill="none" stroke="#6e6e6e" stroke-width="2.8" stroke-linecap="round" stroke-linejoin="round"/></svg>
<svg style="left:110.9px;top:912px;" width="29" height="23.200000000000003" viewBox="0 0 30 24"><path d="M0 4.2 Q0 0.4 3.6 0.4 H9.4 Q11.2 0.4 12.4 1.6 L13.4 2.6 Q14.2 3.4 15.6 3.4 H26.4 Q30 3.4 30 7 V7.6 H0 Z" fill="#868a8f"/><path d="M0 9.2 H30 V20 Q30 23.8 26.2 23.8 H3.8 Q0 23.8 0 20 Z" fill="#868a8f"/></svg>
<span style="top:911.69px;font-size:26px;line-height:26px;color:#424242;letter-spacing:0.460px;left:152.8px;">Preview Content</span>
</section>
<section id="package-dependencies">
<span style="top:979.19px;font-size:26px;line-height:26px;color:#b3b3b3;font-weight:700;-webkit-text-stroke:0;letter-spacing:0.145px;left:29px;">Package Dependencies</span>
<svg style="left:29.799999999999997px;top:1020.3px;" width="16" height="22" viewBox="0 0 16 22"><path d="M4.4 4.4 L11 11 L4.4 17.6" fill="none" stroke="#6e6e6e" stroke-width="2.8" stroke-linecap="round" stroke-linejoin="round"/></svg>
<svg style="left:56px;top:1017px;" width="28" height="31" viewBox="0 0 28 31"><path d="M14 1 Q14.8 1 15.6 1.4 L26 6.9 Q27.1 7.5 27.1 8.8 V21.6 Q27.1 22.9 26 23.5 L15.6 29.4 Q14 30.2 12.4 29.4 L2 23.5 Q0.9 22.9 0.9 21.6 V8.8 Q0.9 7.5 2 6.9 L12.4 1.4 Q13.2 1 14 1 Z" fill="#ad7a38"/><path d="M0.9 7.9 L14 15 L27.1 7.9 M14 15 V30.4" fill="none" stroke="#f5f5f5" stroke-width="1.9"/><path d="M7.2 4.2 L20.6 11.4" fill="none" stroke="#f5f5f5" stroke-width="1.9"/></svg>
<span style="top:1020.29px;font-size:26px;line-height:26px;color:#424242;letter-spacing:0.256px;left:96.7px;">KeychainAccess</span>
<span style="top:1020.29px;font-size:26px;line-height:26px;color:#7a7a7a;letter-spacing:0.068px;left:300.8px;">4.2.2</span>
<svg style="left:29.799999999999997px;top:1064.3px;" width="16" height="22" viewBox="0 0 16 22"><path d="M4.4 4.4 L11 11 L4.4 17.6" fill="none" stroke="#6e6e6e" stroke-width="2.8" stroke-linecap="round" stroke-linejoin="round"/></svg>
<svg style="left:56px;top:1061px;" width="28" height="31" viewBox="0 0 28 31"><path d="M14 1 Q14.8 1 15.6 1.4 L26 6.9 Q27.1 7.5 27.1 8.8 V21.6 Q27.1 22.9 26 23.5 L15.6 29.4 Q14 30.2 12.4 29.4 L2 23.5 Q0.9 22.9 0.9 21.6 V8.8 Q0.9 7.5 2 6.9 L12.4 1.4 Q13.2 1 14 1 Z" fill="#ad7a38"/><path d="M0.9 7.9 L14 15 L27.1 7.9 M14 15 V30.4" fill="none" stroke="#f5f5f5" stroke-width="1.9"/><path d="M7.2 4.2 L20.6 11.4" fill="none" stroke="#f5f5f5" stroke-width="1.9"/></svg>
<span style="top:1064.29px;font-size:26px;line-height:26px;color:#424242;letter-spacing:0.084px;left:96.7px;">Supabase</span>
<span style="top:1064.29px;font-size:26px;line-height:26px;color:#7a7a7a;letter-spacing:-1.299px;left:225px;">2.10.1</span>
<svg style="left:29.799999999999997px;top:1108.3px;" width="16" height="22" viewBox="0 0 16 22"><path d="M4.4 4.4 L11 11 L4.4 17.6" fill="none" stroke="#6e6e6e" stroke-width="2.8" stroke-linecap="round" stroke-linejoin="round"/></svg>
<svg style="left:56px;top:1105px;" width="28" height="31" viewBox="0 0 28 31"><path d="M14 1 Q14.8 1 15.6 1.4 L26 6.9 Q27.1 7.5 27.1 8.8 V21.6 Q27.1 22.9 26 23.5 L15.6 29.4 Q14 30.2 12.4 29.4 L2 23.5 Q0.9 22.9 0.9 21.6 V8.8 Q0.9 7.5 2 6.9 L12.4 1.4 Q13.2 1 14 1 Z" fill="#ad7a38"/><path d="M0.9 7.9 L14 15 L27.1 7.9 M14 15 V30.4" fill="none" stroke="#f5f5f5" stroke-width="1.9"/><path d="M7.2 4.2 L20.6 11.4" fill="none" stroke="#f5f5f5" stroke-width="1.9"/></svg>
<span style="top:1108.29px;font-size:26px;line-height:26px;color:#424242;letter-spacing:1.025px;left:96.7px;">swift-concurrency-extras</span>
<span style="top:1108.29px;font-size:26px;line-height:26px;color:#7a7a7a;letter-spacing:-1.957px;left:412.5px;">1.1.0</span>
<svg style="left:29.799999999999997px;top:1152.3px;" width="16" height="22" viewBox="0 0 16 22"><path d="M4.4 4.4 L11 11 L4.4 17.6" fill="none" stroke="#6e6e6e" stroke-width="2.8" stroke-linecap="round" stroke-linejoin="round"/></svg>
<svg style="left:56px;top:1149px;" width="28" height="31" viewBox="0 0 28 31"><path d="M14 1 Q14.8 1 15.6 1.4 L26 6.9 Q27.1 7.5 27.1 8.8 V21.6 Q27.1 22.9 26 23.5 L15.6 29.4 Q14 30.2 12.4 29.4 L2 23.5 Q0.9 22.9 0.9 21.6 V8.8 Q0.9 7.5 2 6.9 L12.4 1.4 Q13.2 1 14 1 Z" fill="#ad7a38"/><path d="M0.9 7.9 L14 15 L27.1 7.9 M14 15 V30.4" fill="none" stroke="#f5f5f5" stroke-width="1.9"/><path d="M7.2 4.2 L20.6 11.4" fill="none" stroke="#f5f5f5" stroke-width="1.9"/></svg>
<span style="top:1152.29px;font-size:26px;line-height:26px;color:#424242;letter-spacing:1.348px;left:96.7px;">swift-crypto</span>
<span style="top:1152.29px;font-size:26px;line-height:26px;color:#7a7a7a;letter-spacing:-0.032px;left:253.3px;">3.4.0</span>
</section>
<footer id="filter-bar">
<svg style="left:18.4px;top:1844.5px;" width="32" height="32" viewBox="0 0 32 32"><path d="M16 6.8 V25.2 M6.8 16 H25.2" stroke="#4a4a4a" stroke-width="2.6" stroke-linecap="round"/></svg>
<div style="left:56px;top:1838px;width:478px;height:43px;border-radius:12px;background:#e8e8e8;box-shadow:inset 0 0 0 1.2px #d2d2d2;"></div>
<svg style="left:64px;top:1846px;" width="54" height="28" viewBox="0 0 54 28"><rect x="1.6" y="1.6" width="50.4" height="24.4" rx="12.2" fill="none" stroke="#707070" stroke-width="1.8"/><g stroke="#707070" stroke-width="2" stroke-linecap="round"><path d="M11 9.4 H23.6 M13.2 13.8 H21.4 M15.4 18.2 H19.2"/><path d="M33.6 11.6 L37.8 15.8 L42 11.6" fill="none" stroke-linejoin="round"/></g></svg>
<span style="top:1848.38px;font-size:22px;line-height:22px;color:#adadad;letter-spacing:0.622px;left:124.2px;">Filter</span>
<svg style="left:460px;top:1846px;" width="28" height="28" viewBox="0 0 28 28"><circle cx="14" cy="14" r="11.6" fill="none" stroke="#707070" stroke-width="1.9"/><path d="M14.6 7 V14.6 H8.6" fill="none" stroke="#707070" stroke-width="1.9" stroke-linecap="round" stroke-linejoin="round"/></svg>
<svg style="left:494px;top:1846px;" width="30" height="28" viewBox="0 0 30 28"><rect x="2.6" y="2" width="24.4" height="23.6" rx="1.6" fill="none" stroke="#707070" stroke-width="1.9"/><path d="M6.6 14 H13.4 M10 10.6 V17.4 M16.6 14 H22.6" stroke="#707070" stroke-width="1.9" stroke-linecap="round"/></svg>
</footer>
</aside>
<main id="source-editor">
<div style="left:546px;top:189px;width:2448px;height:1643.5px;overflow:hidden;background:#fff;">
<div style="left:0px;top:915px;width:2448px;height:44px;background:#ecf3fe;"></div>
<div style="left:106.20000000000005px;top:0px;width:13.8px;height:1650px;background:#e7e7e7;"></div>
<div style="left:106.20000000000005px;top:432.5px;width:13.8px;height:1400px;background:#d5d5d5;border-radius:7px 7px 0 0;box-shadow:0 0 0 1.3px rgba(255,255,255,0.5);"></div>
<div style="left:106.20000000000005px;top:476.5px;width:13.8px;height:1400px;background:#c4c4c4;border-radius:7px 7px 0 0;box-shadow:0 0 0 1.3px rgba(255,255,255,0.5);"></div>
<div style="left:106.20000000000005px;top:520.5px;width:13.8px;height:1400px;background:#b3b3b3;border-radius:7px 7px 0 0;box-shadow:0 0 0 1.3px rgba(255,255,255,0.5);"></div>
<div style="left:106.20000000000005px;top:564.5px;width:13.8px;height:701px;background:#a3a3a3;border-radius:7px;box-shadow:0 0 0 1.3px rgba(255,255,255,0.5);"></div>
<div style="left:106.20000000000005px;top:696.5px;width:13.8px;height:437px;background:#929292;border-radius:7px;box-shadow:0 0 0 1.3px rgba(255,255,255,0.5);"></div>
<div style="left:106.20000000000005px;top:1312.5px;width:13.8px;height:600px;background:#a3a3a3;border-radius:7px 7px 0 0;box-shadow:0 0 0 1.3px rgba(255,255,255,0.5);"></div>
<div style="left:106.20000000000005px;top:1400.5px;width:13.8px;height:600px;background:#929292;border-radius:7px 7px 0 0;box-shadow:0 0 0 1.3px rgba(255,255,255,0.5);"></div>
<div style="left:106.20000000000005px;top:915px;width:13.8px;height:44px;background:rgba(60,90,140,0.10);"></div>
<div style="left:14px;top:-39px;width:10px;height:162px;background:#b2ccfa;border:1.6px solid #3478f6;box-sizing:border-box;border-radius:5px;"></div>
<div style="left:14px;top:915px;width:10px;height:176px;background:#b2ccfa;border:1.6px solid #3478f6;box-sizing:border-box;border-radius:5px;"></div>
<div style="left:14px;top:1311px;width:10px;height:600px;background:#b2ccfa;border:1.6px solid #3478f6;box-sizing:border-box;border-radius:5px;"></div>
<span class="ln" style="top:36.4px">22</span>
<span class="code" style="left:144.7px;top:39px">    <i class="ot">@State</i> <b class="k">var</b> <i class="od">newItemImage</i>: <i class="pt">TodoItemImage</i>?</span>
<span class="ln" style="top:80.4px">23</span>
<span class="ln" style="top:124.4px">24</span>
<span class="code" style="left:144.7px;top:127px">    <i class="c">// Access the view model through the environment</i></span>
<span class="ln" style="top:168.4px">25</span>
<span class="code" style="left:144.7px;top:171px">    <i class="ot">@Environment</i>(<i class="pt">TodoListViewModel</i>.<b class="k">self</b>) <b class="k">var</b> <i class="od">viewModel</i></span>
<span class="ln" style="top:212.4px">26</span>
<span class="ln" style="top:256.4px">27</span>
<span class="code" style="left:144.7px;top:259px">    <i class="c">// Binding to control whether this view is visible</i></span>
<span class="ln" style="top:300.4px">28</span>
<span class="code" style="left:144.7px;top:303px">    <i class="ot">@Binding</i> <b class="k">var</b> <i class="od">showSheet</i>: <i class="ot">Bool</i></span>
<span class="ln" style="top:344.4px">29</span>
<span class="ln" style="top:388.4px">30</span>
<span class="code" style="left:144.7px;top:391px">    <i class="c">// </i><b class="mk">MARK: Computed properties</b></span>
<span class="ln" style="top:432.4px">31</span>
<span class="code" style="left:144.7px;top:435px">    <b class="k">var</b> <i class="od">body</i>: <b class="k">some</b> <i class="ot">View</i> {</span>
<span class="ln" style="top:476.4px">32</span>
<span class="code" style="left:144.7px;top:479px">        <i class="ot">NavigationView</i> {</span>
<span class="ln" style="top:520.4px">33</span>
<span class="code" style="left:144.7px;top:523px">            <i class="ot">VStack</i> {</span>
<span class="ln" style="top:564.4px">34</span>
<span class="code" style="left:144.7px;top:567px">                <i class="ot">HStack</i> {</span>
<span class="ln" style="top:608.4px">35</span>
<span class="code" style="left:144.7px;top:611px">                    <i class="ot">TextField</i>(<i class="s">"Enter a to-do item"</i>, <i class="of">text</i>: <i class="pf">$newItemDescription</i>)</span>
<span class="ln" style="top:652.4px">36</span>
<span class="ln" style="top:696.4px">37</span>
<span class="code" style="left:144.7px;top:699px">                    <i class="ot">Button</i>(<i class="s">"ADD"</i>) {</span>
<span class="ln" style="top:740.4px">38</span>
<span class="code" style="left:144.7px;top:743px">                        <i class="c">// Add the new to-do item</i></span>
<span class="ln" style="top:784.4px">39</span>
<span class="code" style="left:144.7px;top:787px">                        <i class="pf">viewModel</i>.<i class="pf">createToDo</i>(<i class="pf">withTitle</i>: <i class="pf">newItemDescription</i>)</span>
<span class="ln" style="top:828.4px">40</span>
<span class="code" style="left:144.7px;top:831px">                        <i class="c">// Clear the input field</i></span>
<span class="ln" style="top:872.4px">41</span>
<span class="code" style="left:144.7px;top:875px">                        <i class="pf">newItemDescription</i> = <i class="s">""</i></span>
<span class="ln" style="top:916.4px;color:#222">42</span>
<span class="code" style="left:144.7px;top:919px">                        <i class="c">// Clear the photo picker selection result</i></span>
<span class="ln" style="top:960.4px">43</span>
<span class="code" style="left:144.7px;top:963px">                        <i class="pf">selectionResult</i> = <b class="k">nil</b></span>
<span class="ln" style="top:1004.4px">44</span>
<span class="code" style="left:144.7px;top:1007px">                        <i class="c">// Clear the loaded photo</i></span>
<span class="ln" style="top:1048.4px">45</span>
<span class="code" style="left:144.7px;top:1051px">                        <i class="pf">newItemImage</i> = <b class="k">nil</b></span>
<span class="ln" style="top:1092.4px">46</span>
<span class="code" style="left:144.7px;top:1095px">                    }</span>
<span class="ln" style="top:1136.4px">47</span>
<span class="code" style="left:144.7px;top:1139px">                    .<i class="of">font</i>(.<i class="of">caption</i>)</span>
<span class="ln" style="top:1180.4px">48</span>
<span class="code" style="left:144.7px;top:1183px">                    .<i class="of">disabled</i>(<i class="pf">newItemDescription</i>.<i class="of">trimmingCharacters</i>(<i class="of">in</i>: .<i class="of">whitespaces</i>).<i class="of">isEmpty</i> == <b class="k">true</b>)</span>
<span class="ln" style="top:1224.4px">49</span>
<span class="code" style="left:144.7px;top:1227px">                }</span>
<span class="ln" style="top:1268.4px">50</span>
<span class="ln" style="top:1312.4px">51</span>
<span class="code" style="left:144.7px;top:1315px">                <i class="ot">HStack</i> {</span>
<span class="ln" style="top:1356.4px">52</span>
<span class="ln" style="top:1400.4px">53</span>
<span class="code" style="left:144.7px;top:1403px">                    <i class="ot">PhotosPicker</i>(<i class="of">selection</i>: <i class="pf">$selectionResult</i>, <i class="of">matching</i>: .<i class="of">images</i>) {</span>
<span class="ln" style="top:1444.4px">54</span>
<span class="ln" style="top:1488.4px">55</span>
<span class="code" style="left:144.7px;top:1491px">                        <i class="c">// Has an image been loaded?</i></span>
<span class="ln" style="top:1532.4px">56</span>
<span class="code" style="left:144.7px;top:1535px">                        <b class="k">if</b> <b class="k">let</b> newItemImage = <i class="pf">newItemImage</i> {</span>
<span class="ln" style="top:1576.4px">57</span>
<span class="ln" style="top:1620.4px">58</span>
<span class="code" style="left:144.7px;top:1623px">                            <i class="c">// Yes, show it</i></span>
<div style="left:0;top:0;width:2448px;height:43px;background:#f3f3f3;border-bottom:2px solid #dcdcdc;box-shadow:0 3px 9px rgba(0,0,0,0.09);"></div>
<span class="ln" style="top:1.4px">11</span>
<span class="code" style="left:144.7px;top:4px"><b class="k">struct</b> <i class="td">NewItemView</i>: <i class="ot">View</i> {</span>
</div>
<div style="left:2994px;top:189px;width:30px;height:1643.5px;background:#fafafa;box-shadow:inset 1.5px 0 0 #e8e8e8, inset -1.5px 0 0 #e8e8e8;"></div>
<div style="left:3002px;top:395px;width:16px;height:418px;border-radius:8px;background:#7f7f7f;"></div>
</main>
<footer id="debug-bar">
<div style="left:546px;top:1832px;width:2478px;height:2px;background:#dedede;"></div>
<svg style="left:568px;top:1851px;" width="32" height="20" viewBox="0 0 32 20"><path d="M3.4 1 H21.6 Q23.6 1 24.8 2.6 L29.6 8.6 Q30.6 10 29.6 11.4 L24.8 17.4 Q23.6 19 21.6 19 H3.4 Q0.8 19 0.8 16.4 V3.6 Q0.8 1 3.4 1 Z" fill="#3478f6"/></svg>
<div style="left:614px;top:1849.3px;width:1.7px;height:23.4px;background:#dcdcdc;"></div>
<svg style="left:635px;top:1846px;" width="24" height="30" viewBox="0 0 24 30"><rect x="3.2" y="3.2" width="5.4" height="23.8" rx="1.4" fill="none" stroke="#6b6b6b" stroke-width="1.8"/><rect x="14.6" y="3.2" width="5.4" height="23.8" rx="1.4" fill="none" stroke="#6b6b6b" stroke-width="1.8"/></svg>
<svg style="left:690px;top:1845px;" width="34" height="33" viewBox="690 1845 34 33"><g fill="none" stroke="#b9b9b9" stroke-width="1.9"><path d="M693.4 1865.9 L706 1852.9 L718.2 1865.2 M718.5 1857.3 V1865.6 H710.2"/><rect x="698.2" y="1869.1" width="15.6" height="3.7"/></g></svg>
<svg style="left:752px;top:1845px;" width="28" height="33" viewBox="752 1845 28 33"><g fill="none" stroke="#b9b9b9" stroke-width="1.9"><path d="M766 1847.9 V1865 M759.6 1858 L766 1865.2 L772.4 1858"/><rect x="758.2" y="1869.1" width="15.7" height="3.7"/></g></svg>
<svg style="left:812px;top:1845px;" width="28" height="33" viewBox="812 1845 28 33"><g fill="none" stroke="#b9b9b9" stroke-width="1.9"><path d="M825.9 1865.6 V1849.2 M819.5 1856 L825.9 1848.8 L832.3 1856"/><rect x="818.2" y="1869.1" width="15.7" height="3.7"/></g></svg>
<div style="left:856.1px;top:1849.3px;width:1.7px;height:23.4px;background:#dcdcdc;"></div>
<svg style="left:872px;top:1844px;" width="32" height="34" viewBox="872 1844 32 34"><g fill="none" stroke="#6b6b6b" stroke-width="2.1" stroke-linejoin="round" stroke-linecap="round"><path d="M886.2 1860.6 L897.9 1854.2 V1867.6 L886.2 1873.6 Z"/><path d="M881.8 1871.2 V1857.6 L894 1851.2"/><path d="M877.5 1868.8 V1854.7 L890 1848.6"/></g></svg>
<svg style="left:930px;top:1844px;" width="36" height="34" viewBox="930 1844 36 34"><g fill="none" stroke="#6b6b6b" stroke-width="2"><circle cx="939.8" cy="1853.1" r="3.9"/><circle cx="955.9" cy="1861" r="3.9"/><circle cx="939.8" cy="1868.9" r="3.9"/><path d="M943.3 1854.9 L952.4 1859.3 M943.3 1867.1 L952.4 1862.7"/></g></svg>
<svg style="left:994px;top:1844px;" width="28" height="34" viewBox="994 1844 28 34"><g fill="none" stroke="#6b6b6b" stroke-width="2"><rect x="998.3" y="1849.2" width="19.5" height="9.4" rx="4.7"/><rect x="998.3" y="1863.1" width="19.5" height="9.6" rx="4.8"/></g><circle cx="1003.1" cy="1853.9" r="3" fill="#6b6b6b"/><circle cx="1013.1" cy="1867.9" r="3" fill="#6b6b6b"/></svg>
<svg style="left:1052px;top:1844px;" width="34" height="34" viewBox="1052 1844 34 34"><path d="M1080.4 1848.8 L1056.6 1858.9 L1069.4 1860 L1070.2 1872.4 Z" fill="none" stroke="#6b6b6b" stroke-width="2" stroke-linejoin="round"/></svg>
<div style="left:1098.1px;top:1849.3px;width:1.7px;height:23.4px;background:#dcdcdc;"></div>
<svg style="left:1118px;top:1848.9px;" width="23" height="23" viewBox="0 0 24 24"><rect x="0" y="0" width="24" height="24" rx="5" fill="#7d7d7d"/><g stroke="#fff" stroke-width="1.7" stroke-linecap="round" fill="none"><path d="M13.6 5.6 L8.2 15"/><path d="M10.6 5.6 L17.4 17.6"/><path d="M4.6 15 H19.4"/><path d="M6.9 17.2 L6.4 18.1"/></g></svg>
<span style="top:1850.88px;font-size:22px;line-height:22px;color:#2a2a2a;letter-spacing:0.864px;left:1155px;">TodoList</span>
<span style="top:1850.88px;font-size:22px;line-height:22px;color:#808080;letter-spacing:0.860px;left:2761.3px;-webkit-text-stroke:0.65px;">Line: 42  Col: 43</span>
<div style="left:2954.1px;top:1849.2px;width:1.7px;height:23.6px;background:#dcdcdc;"></div>
<svg style="left:2970px;top:1846px;" width="32" height="30" viewBox="0 0 32 30"><rect x="4.2" y="3.1" width="23.6" height="23.7" rx="5" fill="none" stroke="#777" stroke-width="2.2"/><rect x="7.1" y="18.1" width="17.8" height="5.7" rx="2" fill="#7d7d7d"/></svg>
</footer>
</div>
</body></html>
